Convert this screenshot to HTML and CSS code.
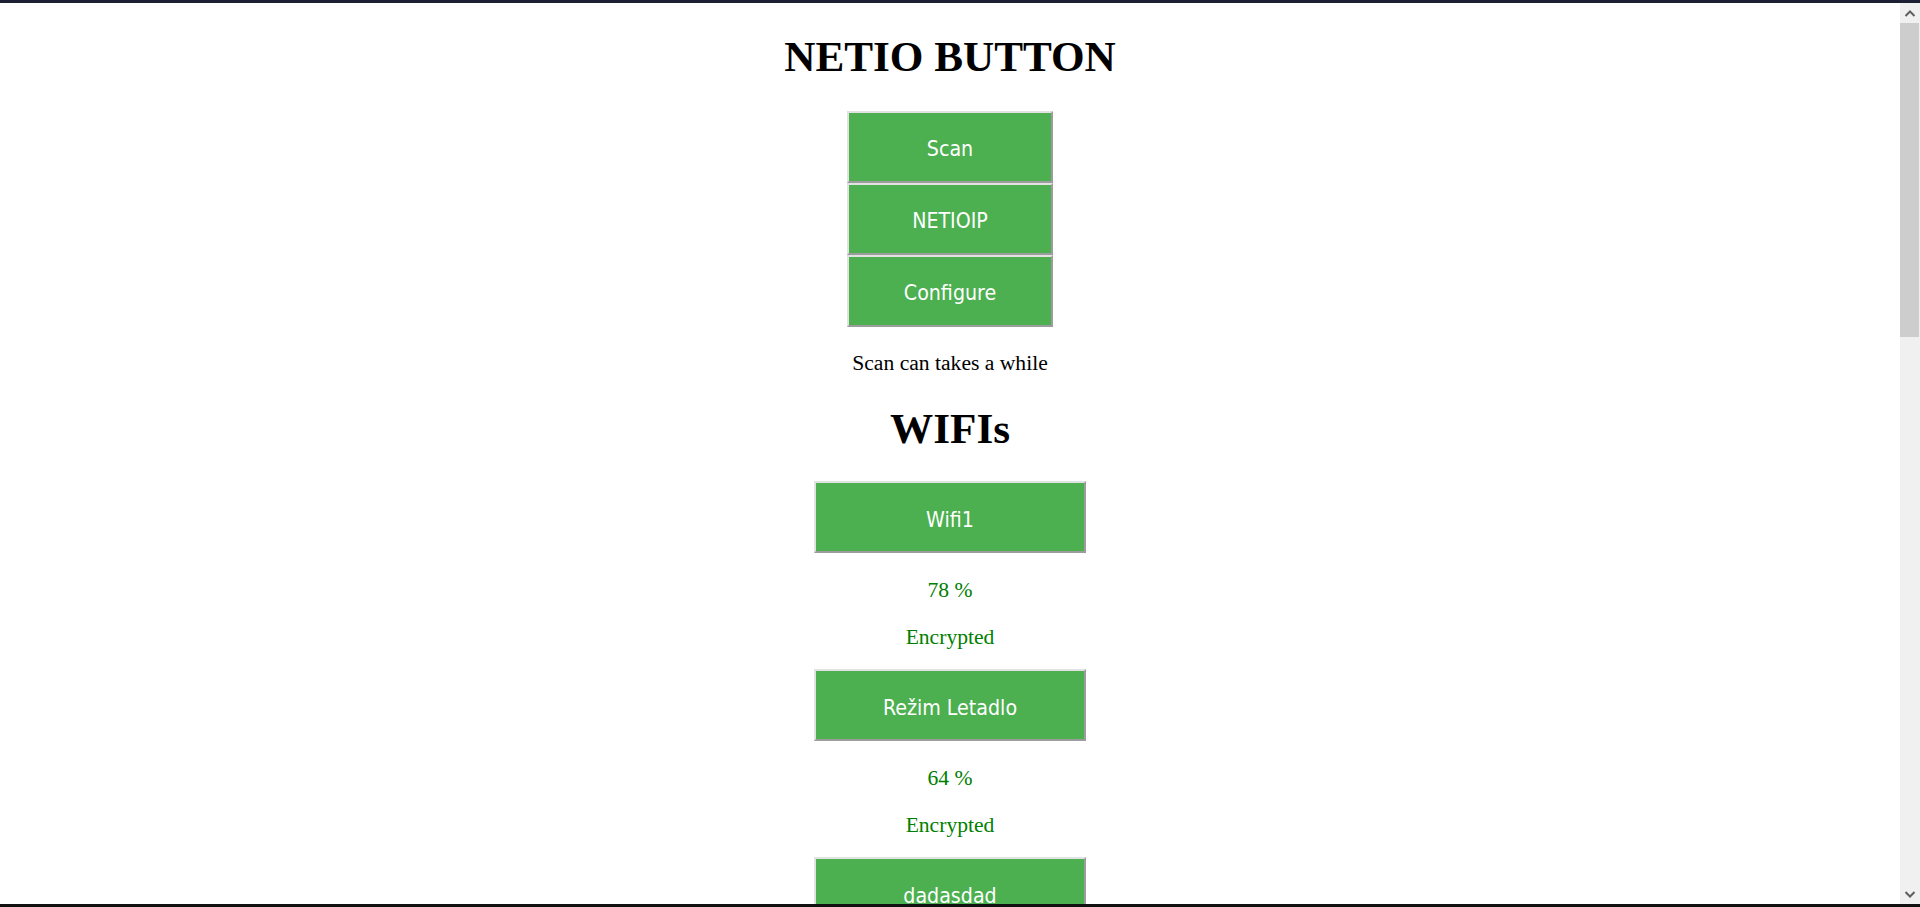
FILE: index.html
```html
<!DOCTYPE html>
<html lang="cs">
<head>
<meta charset="utf-8">
<title>NETIO BUTTON</title>
<link rel="stylesheet" href="styles.css">
</head>
<body>
<div class="frame">
  <main class="page">
    <h1 class="title">NETIO BUTTON</h1>
    <div class="menu">
      <button class="btn btn-menu">Scan</button>
      <button class="btn btn-menu">NETIOIP</button>
      <button class="btn btn-menu">Configure</button>
    </div>
    <p class="note">Scan can takes a while</p>
    <h1 class="title title-wifi">WIFIs</h1>
    <section class="wifis">
      <div class="wifi">
        <button class="btn btn-wifi">Wifi1</button>
        <p class="info">78 %</p>
        <p class="info">Encrypted</p>
      </div>
      <div class="wifi">
        <button class="btn btn-wifi">Režim Letadlo</button>
        <p class="info">64 %</p>
        <p class="info">Encrypted</p>
      </div>
      <div class="wifi">
        <button class="btn btn-wifi">dadasdad</button>
      </div>
    </section>
  </main>
  <div class="scrollbar">
    <div class="sb-arrow">
      <svg width="10" height="7" viewBox="0 0 10 7"><path d="M0.5 6 L5 1.5 L9.5 6" fill="none" stroke="#606060" stroke-width="2"/></svg>
    </div>
    <div class="sb-thumb"></div>
    <div class="sb-track"></div>
    <div class="sb-arrow">
      <svg width="10" height="7" viewBox="0 0 10 7"><path d="M0.5 1 L5 5.5 L9.5 1" fill="none" stroke="#606060" stroke-width="2"/></svg>
    </div>
  </div>
</div>
</body>
</html>
```
FILE: styles.css
```css
html, body {
  margin: 0;
  padding: 0;
  height: 100%;
  overflow: hidden;
  background: #ffffff;
}

.frame {
  box-sizing: border-box;
  height: 907px;
  border-top: 3px solid #1d1f33;
  border-bottom: 3px solid #111111;
  display: flex;
  flex-direction: row;
}

.page {
  flex: 1;
  overflow: hidden;
  text-align: center;
  font-family: "Liberation Serif", "Times New Roman", serif;
  font-size: 21.6px;
  color: #000;
  padding: 0 8px;
}

.title {
  font-family: "Liberation Serif", "Times New Roman", serif;
  font-weight: bold;
  font-size: 43.2px;
  line-height: 49.6px;
  margin: 29px 0 29px;
}

.title-wifi {
  margin: 30px 0 28px;
}

.menu {
  display: flex;
  flex-direction: column;
  align-items: center;
}

.btn {
  display: block;
  margin: 0 auto;
  box-sizing: border-box;
  background: #4caf50;
  color: #ffffff;
  font-family: "DejaVu Sans Condensed", "DejaVu Sans", sans-serif;
  font-size: 21.2px;
  border-style: solid;
  border-width: 2px;
  border-color: #e2e2e2 #9c9c9c #9c9c9c #e2e2e2;
  padding: 4px 0 0;
  cursor: pointer;
}

.btn-menu {
  width: 206px;
  height: 72px;
}

.btn-wifi {
  width: 272px;
  height: 72px;
}

.note,
.info {
  margin: 21.6px 0;
  padding-top: 5px;
  line-height: 20.6px;
}

.info {
  color: #008000;
}

.scrollbar {
  width: 20px;
  background: #f0f0f0;
  display: flex;
  flex-direction: column;
}

.sb-arrow {
  height: 20px;
  display: flex;
  align-items: center;
  justify-content: center;
  padding-right: 1px;
}

.sb-thumb {
  height: 314px;
  background: #cdcdcd;
  margin-right: 1px;
}

.sb-track {
  flex: 1;
}
```
